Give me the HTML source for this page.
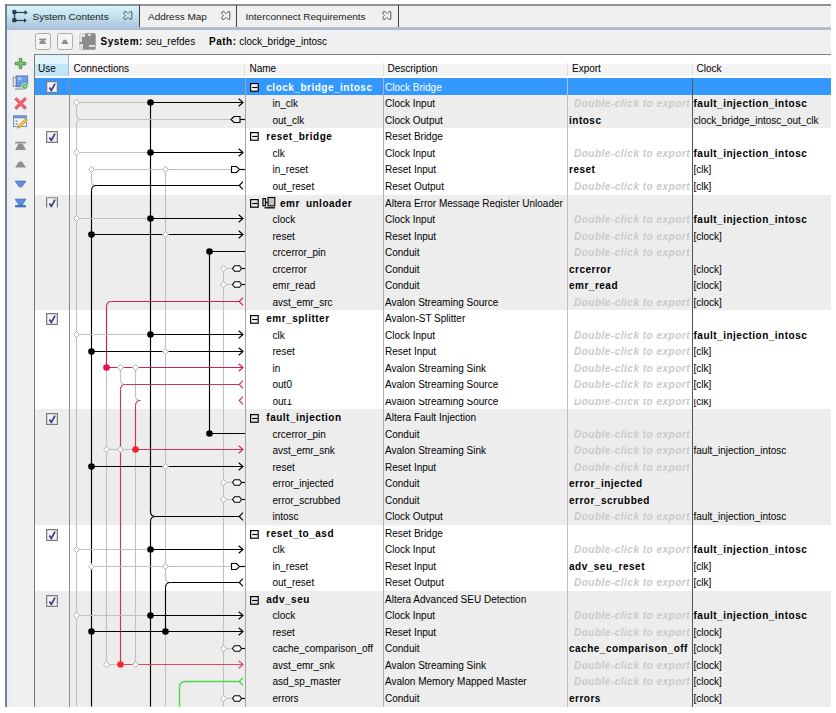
<!DOCTYPE html>
<html><head><meta charset="utf-8"><style>
html,body{margin:0;padding:0;background:#fff;}
#root{position:relative;width:836px;height:713px;overflow:hidden;background:#fff;font-family:"Liberation Sans",sans-serif;font-size:10px;color:#000;}
.a{position:absolute;}
.t{position:absolute;white-space:nowrap;line-height:16.56px;height:16.56px;}
.b{font-weight:bold;letter-spacing:0.5px;}
.dc{font-weight:bold;font-style:italic;color:#cacaca;letter-spacing:0.5px;}
svg{overflow:visible}
</style></head><body><div id="root">

<div class="a" style="left:5px;top:4px;width:825.5px;height:26px;background:#f0f0f0"></div>
<div class="a" style="left:5px;top:4px;width:825.5px;height:1.6px;background:#8d9397"></div>
<div class="a" style="left:139px;top:26.5px;width:691.5px;height:1.5px;background:#bcc4cb"></div>
<div class="a" style="left:5px;top:28px;width:825.5px;height:1.5px;background:#a9bdd0"></div>
<div class="a" style="left:5px;top:5.6px;width:134px;height:23.9px;background:linear-gradient(#d6f3fb,#c2e2ef 45%,#a9c1dc)"></div>
<div class="a" style="left:139px;top:5px;width:1px;height:22px;background:#404040"></div>
<div class="a" style="left:236px;top:5px;width:1px;height:22px;background:#404040"></div>
<div class="a" style="left:398px;top:5px;width:1px;height:22px;background:#404040"></div>
<div class="a" style="left:5px;top:29.5px;width:825.5px;height:677.1px;background:#f0f0f0"></div>
<div class="a" style="left:5px;top:4px;width:1.6px;height:702.6px;background:#76838f"></div>
<div class="a" style="left:6.6px;top:29.5px;width:5px;height:677.1px;background:linear-gradient(90deg,#e2ecf6,#f0f0f0)"></div>
<div class="t" style="left:32.5px;top:9.2px;transform:scaleY(0.9);transform-origin:0 50%;color:#1a1a1a">System Contents</div>
<div class="t" style="left:148px;top:9.2px;transform:scaleY(0.9);transform-origin:0 50%;color:#1a1a1a">Address Map</div>
<div class="t" style="left:245.5px;top:9.2px;transform:scaleY(0.9);transform-origin:0 50%;color:#1a1a1a">Interconnect Requirements</div>
<svg class="a" style="left:0;top:0" width="40" height="30"><g fill="#2c4452" stroke="#2c4452"><circle cx="14.4" cy="12.1" r="2.4" stroke="none"/><circle cx="14.4" cy="20.2" r="2.4" stroke="none"/><line x1="14.5" y1="12" x2="14.5" y2="20" stroke-width="1.4"/><line x1="15" y1="12.5" x2="26.5" y2="12.5" stroke-width="1.2"/><line x1="15" y1="20.5" x2="26" y2="20.5" stroke-width="1.2"/><path d="M24.5 10.8 L26.8 12.5 L24.5 14.2" fill="none" stroke-width="1.1"/><path d="M24 18.3 L26.8 20.5 L24 22.7 Z" stroke="none"/></g></svg>
<svg class="a" style="left:122.5px;top:11.3px" width="10" height="9" viewBox="0 0 10 9"><path d="M1.2 0.8 C2.5 0 3.5 1 5 2.6 C6.5 1 7.5 0 8.8 0.8 L8.8 8.2 C7.5 9 6.5 8 5 6.4 C3.5 8 2.5 9 1.2 8.2 C0.2 7 1 6 2.4 4.5 C1 3 0.2 2 1.2 0.8 Z" fill="none" stroke="#4a5a5e" stroke-width="1"/></svg>
<svg class="a" style="left:220.5px;top:11.3px" width="10" height="9" viewBox="0 0 10 9"><path d="M1.2 0.8 C2.5 0 3.5 1 5 2.6 C6.5 1 7.5 0 8.8 0.8 L8.8 8.2 C7.5 9 6.5 8 5 6.4 C3.5 8 2.5 9 1.2 8.2 C0.2 7 1 6 2.4 4.5 C1 3 0.2 2 1.2 0.8 Z" fill="none" stroke="#4a5a5e" stroke-width="1"/></svg>
<svg class="a" style="left:382px;top:11.3px" width="10" height="9" viewBox="0 0 10 9"><path d="M1.2 0.8 C2.5 0 3.5 1 5 2.6 C6.5 1 7.5 0 8.8 0.8 L8.8 8.2 C7.5 9 6.5 8 5 6.4 C3.5 8 2.5 9 1.2 8.2 C0.2 7 1 6 2.4 4.5 C1 3 0.2 2 1.2 0.8 Z" fill="none" stroke="#4a5a5e" stroke-width="1"/></svg>
<div class="a" style="left:35.2px;top:33.2px;width:15.8px;height:16.4px;box-sizing:border-box;border:1px solid #adadad;border-radius:2.5px;background:#f5f5f5"></div>
<div class="a" style="left:57.1px;top:33.2px;width:15.8px;height:16.4px;box-sizing:border-box;border:1px solid #adadad;border-radius:2.5px;background:#f5f5f5"></div>
<svg class="a" style="left:35px;top:33px" width="40" height="17"><g fill="#8f8f8f"><rect x="4" y="5.6" width="7.2" height="1.6"/><path d="M5.8 7.2 L9.4 7.2 L11.2 11 L4 11 Z"/><path d="M28.5 6.7 L31.2 6.7 L33.4 11 L26.4 11 Z"/></g></svg>
<svg class="a" style="left:79px;top:33px" width="17" height="17"><rect x="0.3" y="0.3" width="16.4" height="16.4" rx="1.5" fill="#8c8c8c"/><path d="M0.3 0.3 H6 V4 H3 V9 H0.3 Z" fill="#f0f0f0" opacity="0.85"/><path d="M0.3 11 H4 V16.7 H0.3 Z" fill="#f0f0f0" opacity="0.8"/><path d="M9 1 H12 V3 H9 Z" fill="#d8d8d8"/><path d="M10 12 H16 V14 H10 Z" fill="#dcdcdc"/></svg>
<div class="t" style="left:100.5px;top:34.0px"><span class="b">System:</span> seu_refdes</div>
<div class="t" style="left:209px;top:34.0px"><span class="b">Path:</span> clock_bridge_intosc</div>
<svg class="a" style="left:0;top:50px" width="34" height="165"><path d="M19.2 8.4 H21.8 V12.2 H25.8 V14.8 H21.8 V18.6 H19.2 V14.8 H15.2 V12.2 H19.2 Z" fill="#78c474" stroke="#3d8c3d" stroke-width="0.9"/><rect x="13.2" y="27.2" width="3" height="9" fill="#f4f4f4" stroke="#808080" stroke-width="0.9"/><rect x="16.2" y="25.9" width="11.5" height="10.9" fill="#6f9be0" stroke="#4670b8" stroke-width="0.8"/><rect x="17.5" y="27.2" width="4" height="3" fill="#a8c6f0"/><rect x="15" y="38.3" width="9" height="1.4" fill="#a0a0a0"/><circle cx="24.6" cy="36.4" r="3" fill="#55b055" stroke="#e8f4e8" stroke-width="0.8"/><path d="M23.5 36.4 H25.8" stroke="#fff" stroke-width="0.9"/><path d="M16.4 47.4 L20.6 51.4 L24.8 47.4 L26.6 49.2 L22.5 53.4 L26.6 57.6 L24.8 59.4 L20.6 55.4 L16.4 59.4 L14.6 57.6 L18.7 53.4 L14.6 49.2 Z" fill="#f25c6c" stroke="#e04458" stroke-width="0.6"/><rect x="13.6" y="65.8" width="12.8" height="10.8" fill="#f4f6fa" stroke="#6680a8" stroke-width="0.9"/><rect x="13.6" y="65.8" width="12.8" height="2.6" fill="#6d95d4"/><rect x="15.5" y="70.5" width="2.2" height="1.3" fill="#7a8aa0"/><rect x="15.5" y="73.3" width="2.2" height="1.3" fill="#7a8aa0"/><path d="M17.5 78.2 L18.4 75.2 L25.6 68.4 L27.5 70.2 L20.3 77.2 Z" fill="#f2c640" stroke="#b88a20" stroke-width="0.7"/><rect x="15.1" y="91.7" width="10.9" height="1.7" fill="#8e8e8e"/><path d="M18.6 93.4 L22.5 93.4 L26 99.9 L15.1 99.9 Z" fill="#8e8e8e"/><path d="M19 111.4 L22 111.4 L26 117.4 L15.1 117.4 Z" fill="#8e8e8e"/><path d="M15.1 131 L26 131 L21.8 137 L19.3 137 Z" fill="#5b8ee0" stroke="#3a66b8" stroke-width="0.6"/><path d="M15.1 149.1 L26 149.1 L22.3 155 L18.8 155 Z" fill="#5b8ee0" stroke="#3a66b8" stroke-width="0.6"/><rect x="15.1" y="155.1" width="10.9" height="2.2" fill="#3d6cc8"/></svg>
<div class="a" style="left:34px;top:54.0px;width:796.5px;height:652.6px;background:#fff"></div>
<div class="a" style="left:34px;top:54.0px;width:796.5px;height:1px;background:#7f7f7f"></div>
<div class="a" style="left:34px;top:54.0px;width:1px;height:652.6px;background:#737b80"></div>
<div class="a" style="left:35px;top:55.0px;width:795.5px;height:20.799999999999997px;background:linear-gradient(#ffffff,#ffffff 42%,#f5f5f5 45%,#f2f2f2)"></div>
<div class="a" style="left:35px;top:55.0px;width:33px;height:20.799999999999997px;background:linear-gradient(#e2f3fb,#e2f3fb 42%,#c4e7f7 45%,#bfe4f6)"></div>
<div class="a" style="left:68px;top:55.0px;width:1px;height:20.799999999999997px;background:#9bb8cc"></div>
<div class="a" style="left:244px;top:63.0px;width:1px;height:12.799999999999997px;background:#dedede"></div>
<div class="a" style="left:383px;top:63.0px;width:1px;height:12.799999999999997px;background:#dedede"></div>
<div class="a" style="left:567px;top:63.0px;width:1px;height:12.799999999999997px;background:#dedede"></div>
<div class="a" style="left:692px;top:63.0px;width:1px;height:12.799999999999997px;background:#dedede"></div>
<div class="t" style="left:38px;top:60.6px">Use</div>
<div class="t" style="left:73.5px;top:60.6px">Connections</div>
<div class="t" style="left:249.5px;top:60.6px">Name</div>
<div class="t" style="left:387.5px;top:60.6px">Description</div>
<div class="t" style="left:572px;top:60.6px">Export</div>
<div class="t" style="left:696.5px;top:60.6px">Clock</div>
<div class="a" style="left:35px;top:78.00px;width:795.5px;height:49.68px;background:#ededed"></div>
<div class="a" style="left:35px;top:194.80px;width:795.5px;height:115.04px;background:#ededed"></div>
<div class="a" style="left:35px;top:409.20px;width:795.5px;height:115.92px;background:#ededed"></div>
<div class="a" style="left:35px;top:591.36px;width:795.5px;height:115.24px;background:#ededed"></div>
<div class="a" style="left:35px;top:78.00px;width:795.5px;height:16.56px;background:#3399ff"></div>
<div class="a" style="left:69px;top:78.0px;width:1px;height:628.6px;background:#8a8a8a"></div>
<div class="a" style="left:245px;top:78.0px;width:1px;height:628.6px;background:#a4a4a4"></div>
<div class="a" style="left:383px;top:78.0px;width:1px;height:628.6px;background:#b0b0b0"></div>
<div class="a" style="left:567px;top:78.0px;width:1px;height:628.6px;background:#c0c0c0"></div>
<div class="a" style="left:692px;top:78.0px;width:1px;height:628.6px;background:#555"></div>
<svg class="a" style="left:46px;top:81.40px;" width="12" height="12"><rect x="0.5" y="0.5" width="11" height="11" fill="#f4f4f8" stroke="#7c7c7c"/><rect x="1.5" y="1.5" width="9" height="9" fill="none" stroke="#d4d4de" stroke-width="1"/><path d="M3.4 6.4 L5.4 9.4 L9 2.6" fill="none" stroke="#3b3f8e" stroke-width="1.8" stroke-linejoin="round"/></svg>
<svg class="a" style="left:250px;top:82.80px" width="9" height="9"><rect x="0.6" y="0.6" width="7.6" height="7.6" fill="#fff" stroke="#000" stroke-width="1.2"/><line x1="2.2" y1="4.5" x2="7.5" y2="4.5" stroke="#000" stroke-width="1.2"/></svg>
<div class="t b" style="left:266.3px;top:79.70px;color:#fff">clock_bridge_intosc</div>
<div class="t" style="left:385px;top:79.70px;color:#fff">Clock Bridge</div>
<div class="t" style="left:272.5px;top:96.26px">in_clk</div>
<div class="t" style="left:385px;top:96.26px;color:#000">Clock Input</div>
<div class="t dc" style="left:574px;top:96.26px">Double-click to export</div>
<div class="t b" style="left:693.5px;top:96.26px">fault_injection_intosc</div>
<div class="t" style="left:272.5px;top:112.82px">out_clk</div>
<div class="t" style="left:385px;top:112.82px;color:#000">Clock Output</div>
<div class="t b" style="left:569px;top:112.82px">intosc</div>
<div class="t" style="left:693.5px;top:112.82px">clock_bridge_intosc_out_clk</div>
<svg class="a" style="left:46px;top:131.08px;" width="12" height="12"><rect x="0.5" y="0.5" width="11" height="11" fill="#f4f4f8" stroke="#7c7c7c"/><rect x="1.5" y="1.5" width="9" height="9" fill="none" stroke="#d4d4de" stroke-width="1"/><path d="M3.4 6.4 L5.4 9.4 L9 2.6" fill="none" stroke="#3b3f8e" stroke-width="1.8" stroke-linejoin="round"/></svg>
<svg class="a" style="left:250px;top:132.48px" width="9" height="9"><rect x="0.6" y="0.6" width="7.6" height="7.6" fill="none" stroke="#000" stroke-width="1.2"/><line x1="2.2" y1="4.5" x2="7.5" y2="4.5" stroke="#000" stroke-width="1.2"/></svg>
<div class="t b" style="left:266.3px;top:129.38px;color:#000">reset_bridge</div>
<div class="t" style="left:385px;top:129.38px;color:#000">Reset Bridge</div>
<div class="t" style="left:272.5px;top:145.94px">clk</div>
<div class="t" style="left:385px;top:145.94px;color:#000">Clock Input</div>
<div class="t dc" style="left:574px;top:145.94px">Double-click to export</div>
<div class="t b" style="left:693.5px;top:145.94px">fault_injection_intosc</div>
<div class="t" style="left:272.5px;top:162.46px">in_reset</div>
<div class="t" style="left:385px;top:162.46px;color:#000">Reset Input</div>
<div class="t b" style="left:569px;top:162.46px">reset</div>
<div class="t" style="left:693.5px;top:162.46px">[clk]</div>
<div class="t" style="left:272.5px;top:178.97px">out_reset</div>
<div class="t" style="left:385px;top:178.97px;color:#000">Reset Output</div>
<div class="t dc" style="left:574px;top:178.97px">Double-click to export</div>
<div class="t" style="left:693.5px;top:178.97px">[clk]</div>
<svg class="a" style="left:46px;top:197.32px;clip-path:inset(0 0 1.7px 0);" width="12" height="12"><rect x="0.5" y="0.5" width="11" height="11" fill="#f4f4f8" stroke="#7c7c7c"/><rect x="1.5" y="1.5" width="9" height="9" fill="none" stroke="#d4d4de" stroke-width="1"/><path d="M3.4 6.4 L5.4 9.4 L9 2.6" fill="none" stroke="#3b3f8e" stroke-width="1.8" stroke-linejoin="round"/></svg>
<svg class="a" style="left:250px;top:198.72px" width="9" height="9"><rect x="0.6" y="0.6" width="7.6" height="7.6" fill="none" stroke="#000" stroke-width="1.2"/><line x1="2.2" y1="4.5" x2="7.5" y2="4.5" stroke="#000" stroke-width="1.2"/></svg>
<svg class="a" style="left:261px;top:193.92px" width="16" height="16"><g fill="none" stroke="#000" stroke-width="1.1"><rect x="1.9" y="4.6" width="2.6" height="7.2" fill="#d0d0d0"/><rect x="7" y="3.5" width="6.8" height="8.4" fill="#c4c4c4"/><line x1="4.5" y1="8.5" x2="7" y2="8.5"/><line x1="3.5" y1="13.8" x2="14" y2="13.8" stroke-width="1.3"/></g></svg>
<div class="t b" style="left:280px;top:195.88px;height:11.72px;overflow:hidden;color:#000">emr_unloader</div>
<div class="t" style="left:385px;top:195.88px;height:11.72px;overflow:hidden;">Altera Error Message Register Unloader</div>
<div class="t" style="left:272.5px;top:212.00px">clock</div>
<div class="t" style="left:385px;top:212.00px;color:#000">Clock Input</div>
<div class="t dc" style="left:574px;top:212.00px">Double-click to export</div>
<div class="t b" style="left:693.5px;top:212.00px">fault_injection_intosc</div>
<div class="t" style="left:272.5px;top:228.51px">reset</div>
<div class="t" style="left:385px;top:228.51px;color:#000">Reset Input</div>
<div class="t dc" style="left:574px;top:228.51px">Double-click to export</div>
<div class="t" style="left:693.5px;top:228.51px">[clock]</div>
<div class="t" style="left:272.5px;top:245.03px">crcerror_pin</div>
<div class="t" style="left:385px;top:245.03px;color:#000">Conduit</div>
<div class="t dc" style="left:574px;top:245.03px">Double-click to export</div>
<div class="t" style="left:272.5px;top:261.54px">crcerror</div>
<div class="t" style="left:385px;top:261.54px;color:#000">Conduit</div>
<div class="t b" style="left:569px;top:261.54px">crcerror</div>
<div class="t" style="left:693.5px;top:261.54px">[clock]</div>
<div class="t" style="left:272.5px;top:278.06px">emr_read</div>
<div class="t" style="left:385px;top:278.06px;color:#000">Conduit</div>
<div class="t b" style="left:569px;top:278.06px">emr_read</div>
<div class="t" style="left:693.5px;top:278.06px">[clock]</div>
<div class="t" style="left:272.5px;top:294.57px">avst_emr_src</div>
<div class="t" style="left:385px;top:294.57px;color:#000">Avalon Streaming Source</div>
<div class="t dc" style="left:574px;top:294.57px">Double-click to export</div>
<div class="t" style="left:693.5px;top:294.57px">[clock]</div>
<svg class="a" style="left:46px;top:313.24px;" width="12" height="12"><rect x="0.5" y="0.5" width="11" height="11" fill="#f4f4f8" stroke="#7c7c7c"/><rect x="1.5" y="1.5" width="9" height="9" fill="none" stroke="#d4d4de" stroke-width="1"/><path d="M3.4 6.4 L5.4 9.4 L9 2.6" fill="none" stroke="#3b3f8e" stroke-width="1.8" stroke-linejoin="round"/></svg>
<svg class="a" style="left:250px;top:314.64px" width="9" height="9"><rect x="0.6" y="0.6" width="7.6" height="7.6" fill="none" stroke="#000" stroke-width="1.2"/><line x1="2.2" y1="4.5" x2="7.5" y2="4.5" stroke="#000" stroke-width="1.2"/></svg>
<div class="t b" style="left:266.3px;top:311.09px;color:#000">emr_splitter</div>
<div class="t" style="left:385px;top:311.09px;color:#000">Avalon-ST Splitter</div>
<div class="t" style="left:272.5px;top:327.60px">clk</div>
<div class="t" style="left:385px;top:327.60px;color:#000">Clock Input</div>
<div class="t dc" style="left:574px;top:327.60px">Double-click to export</div>
<div class="t b" style="left:693.5px;top:327.60px">fault_injection_intosc</div>
<div class="t" style="left:272.5px;top:344.12px">reset</div>
<div class="t" style="left:385px;top:344.12px;color:#000">Reset Input</div>
<div class="t dc" style="left:574px;top:344.12px">Double-click to export</div>
<div class="t" style="left:693.5px;top:344.12px">[clk]</div>
<div class="t" style="left:272.5px;top:360.63px">in</div>
<div class="t" style="left:385px;top:360.63px;color:#000">Avalon Streaming Sink</div>
<div class="t dc" style="left:574px;top:360.63px">Double-click to export</div>
<div class="t" style="left:693.5px;top:360.63px">[clk]</div>
<div class="t" style="left:272.5px;top:377.15px">out0</div>
<div class="t" style="left:385px;top:377.15px;color:#000">Avalon Streaming Source</div>
<div class="t dc" style="left:574px;top:377.15px">Double-click to export</div>
<div class="t" style="left:693.5px;top:377.15px">[clk]</div>
<div class="a" style="left:272.5px;top:398.64px;height:10.56px;overflow:hidden;width:300px"><div class="t" style="left:0;top:-4.30px">out1</div><div class="t" style="left:112.5px;top:-4.30px">Avalon Streaming Source</div></div>
<div class="a" style="left:570px;top:398.64px;height:10.56px;overflow:hidden;width:200px"><div class="t dc" style="left:4px;top:-4.30px">Double-click to export</div><div class="t" style="left:123.5px;top:-4.30px">[clk]</div></div>
<svg class="a" style="left:46px;top:412.60px;" width="12" height="12"><rect x="0.5" y="0.5" width="11" height="11" fill="#f4f4f8" stroke="#7c7c7c"/><rect x="1.5" y="1.5" width="9" height="9" fill="none" stroke="#d4d4de" stroke-width="1"/><path d="M3.4 6.4 L5.4 9.4 L9 2.6" fill="none" stroke="#3b3f8e" stroke-width="1.8" stroke-linejoin="round"/></svg>
<svg class="a" style="left:250px;top:414.00px" width="9" height="9"><rect x="0.6" y="0.6" width="7.6" height="7.6" fill="none" stroke="#000" stroke-width="1.2"/><line x1="2.2" y1="4.5" x2="7.5" y2="4.5" stroke="#000" stroke-width="1.2"/></svg>
<div class="t b" style="left:266.3px;top:410.18px;color:#000">fault_injection</div>
<div class="t" style="left:385px;top:410.18px;color:#000">Altera Fault Injection</div>
<div class="t" style="left:272.5px;top:426.69px">crcerror_pin</div>
<div class="t" style="left:385px;top:426.69px;color:#000">Conduit</div>
<div class="t dc" style="left:574px;top:426.69px">Double-click to export</div>
<div class="t" style="left:272.5px;top:443.21px">avst_emr_snk</div>
<div class="t" style="left:385px;top:443.21px;color:#000">Avalon Streaming Sink</div>
<div class="t dc" style="left:574px;top:443.21px">Double-click to export</div>
<div class="t" style="left:693.5px;top:443.21px">fault_injection_intosc</div>
<div class="t" style="left:272.5px;top:459.72px">reset</div>
<div class="t" style="left:385px;top:459.72px;color:#000">Reset Input</div>
<div class="t dc" style="left:574px;top:459.72px">Double-click to export</div>
<div class="t" style="left:272.5px;top:476.24px">error_injected</div>
<div class="t" style="left:385px;top:476.24px;color:#000">Conduit</div>
<div class="t b" style="left:569px;top:476.24px">error_injected</div>
<div class="t" style="left:272.5px;top:492.75px">error_scrubbed</div>
<div class="t" style="left:385px;top:492.75px;color:#000">Conduit</div>
<div class="t b" style="left:569px;top:492.75px">error_scrubbed</div>
<div class="t" style="left:272.5px;top:509.27px">intosc</div>
<div class="t" style="left:385px;top:509.27px;color:#000">Clock Output</div>
<div class="t dc" style="left:574px;top:509.27px">Double-click to export</div>
<div class="t" style="left:693.5px;top:509.27px">fault_injection_intosc</div>
<svg class="a" style="left:46px;top:528.52px;" width="12" height="12"><rect x="0.5" y="0.5" width="11" height="11" fill="#f4f4f8" stroke="#7c7c7c"/><rect x="1.5" y="1.5" width="9" height="9" fill="none" stroke="#d4d4de" stroke-width="1"/><path d="M3.4 6.4 L5.4 9.4 L9 2.6" fill="none" stroke="#3b3f8e" stroke-width="1.8" stroke-linejoin="round"/></svg>
<svg class="a" style="left:250px;top:529.92px" width="9" height="9"><rect x="0.6" y="0.6" width="7.6" height="7.6" fill="none" stroke="#000" stroke-width="1.2"/><line x1="2.2" y1="4.5" x2="7.5" y2="4.5" stroke="#000" stroke-width="1.2"/></svg>
<div class="t b" style="left:266.3px;top:525.78px;color:#000">reset_to_asd</div>
<div class="t" style="left:385px;top:525.78px;color:#000">Reset Bridge</div>
<div class="t" style="left:272.5px;top:542.30px">clk</div>
<div class="t" style="left:385px;top:542.30px;color:#000">Clock Input</div>
<div class="t dc" style="left:574px;top:542.30px">Double-click to export</div>
<div class="t b" style="left:693.5px;top:542.30px">fault_injection_intosc</div>
<div class="t" style="left:272.5px;top:558.82px">in_reset</div>
<div class="t" style="left:385px;top:558.82px;color:#000">Reset Input</div>
<div class="t b" style="left:569px;top:558.82px">adv_seu_reset</div>
<div class="t" style="left:693.5px;top:558.82px">[clk]</div>
<div class="t" style="left:272.5px;top:575.33px">out_reset</div>
<div class="t" style="left:385px;top:575.33px;color:#000">Reset Output</div>
<div class="t dc" style="left:574px;top:575.33px">Double-click to export</div>
<div class="t" style="left:693.5px;top:575.33px">[clk]</div>
<svg class="a" style="left:46px;top:594.76px;" width="12" height="12"><rect x="0.5" y="0.5" width="11" height="11" fill="#f4f4f8" stroke="#7c7c7c"/><rect x="1.5" y="1.5" width="9" height="9" fill="none" stroke="#d4d4de" stroke-width="1"/><path d="M3.4 6.4 L5.4 9.4 L9 2.6" fill="none" stroke="#3b3f8e" stroke-width="1.8" stroke-linejoin="round"/></svg>
<svg class="a" style="left:250px;top:596.16px" width="9" height="9"><rect x="0.6" y="0.6" width="7.6" height="7.6" fill="none" stroke="#000" stroke-width="1.2"/><line x1="2.2" y1="4.5" x2="7.5" y2="4.5" stroke="#000" stroke-width="1.2"/></svg>
<div class="t b" style="left:266.3px;top:591.85px;color:#000">adv_seu</div>
<div class="t" style="left:385px;top:591.85px;color:#000">Altera Advanced SEU Detection</div>
<div class="t" style="left:272.5px;top:608.36px">clock</div>
<div class="t" style="left:385px;top:608.36px;color:#000">Clock Input</div>
<div class="t dc" style="left:574px;top:608.36px">Double-click to export</div>
<div class="t b" style="left:693.5px;top:608.36px">fault_injection_intosc</div>
<div class="t" style="left:272.5px;top:624.88px">reset</div>
<div class="t" style="left:385px;top:624.88px;color:#000">Reset Input</div>
<div class="t dc" style="left:574px;top:624.88px">Double-click to export</div>
<div class="t" style="left:693.5px;top:624.88px">[clock]</div>
<div class="t" style="left:272.5px;top:641.39px">cache_comparison_off</div>
<div class="t" style="left:385px;top:641.39px;color:#000">Conduit</div>
<div class="t b" style="left:569px;top:641.39px">cache_comparison_off</div>
<div class="t" style="left:693.5px;top:641.39px">[clock]</div>
<div class="t" style="left:272.5px;top:657.90px">avst_emr_snk</div>
<div class="t" style="left:385px;top:657.90px;color:#000">Avalon Streaming Sink</div>
<div class="t dc" style="left:574px;top:657.90px">Double-click to export</div>
<div class="t" style="left:693.5px;top:657.90px">[clock]</div>
<div class="t" style="left:272.5px;top:674.42px">asd_sp_master</div>
<div class="t" style="left:385px;top:674.42px;color:#000">Avalon Memory Mapped Master</div>
<div class="t dc" style="left:574px;top:674.42px">Double-click to export</div>
<div class="t" style="left:693.5px;top:674.42px">[clock]</div>
<div class="t" style="left:272.5px;top:690.93px">errors</div>
<div class="t" style="left:385px;top:690.93px;color:#000">Conduit</div>
<div class="t b" style="left:569px;top:690.93px">errors</div>
<div class="t" style="left:693.5px;top:690.93px">[clock]</div>
<svg class="a" style="left:0;top:0" width="836" height="713" viewBox="0 0 836 713"><line x1="76.50" y1="102.50" x2="76.50" y2="114.50" stroke="#c2c2c2" stroke-width="1.15"/><path d="M76.50 111.50 L76.50 114.50 C76.50 118.00 78.50 119.50 81.50 119.50" fill="none" stroke="#c2c2c2" stroke-width="1.15"/><path d="M81.50 119.50 C78.50 119.50 76.50 121.00 76.50 124.50" fill="none" stroke="#c2c2c2" stroke-width="1.15"/><line x1="76.50" y1="124.50" x2="76.50" y2="706.60" stroke="#c2c2c2" stroke-width="1.15"/><line x1="91.50" y1="169.50" x2="91.50" y2="180.50" stroke="#c2c2c2" stroke-width="1.15"/><path d="M91.50 177.50 L91.50 180.50 C91.50 184.00 93.50 185.50 96.50 185.50" fill="none" stroke="#c2c2c2" stroke-width="1.15"/><path d="M96.50 185.50 C93.50 185.50 91.50 187.00 91.50 190.50" fill="none" stroke="#000" stroke-width="1.15"/><line x1="91.50" y1="190.50" x2="91.50" y2="706.60" stroke="#000" stroke-width="1.15"/><path d="M111.50 301.50 C108.50 301.50 106.50 303.00 106.50 306.50" fill="none" stroke="#c8205a" stroke-width="1.15"/><line x1="106.50" y1="306.50" x2="106.50" y2="367.50" stroke="#c8205a" stroke-width="1.15"/><line x1="106.50" y1="367.50" x2="106.50" y2="664.50" stroke="#c2c2c2" stroke-width="1.15"/><line x1="120.50" y1="367.50" x2="120.50" y2="379.50" stroke="#c2c2c2" stroke-width="1.15"/><path d="M120.50 376.50 L120.50 379.50 C120.50 383.00 122.50 384.50 125.50 384.50" fill="none" stroke="#c2c2c2" stroke-width="1.15"/><path d="M125.50 384.50 C122.50 384.50 120.50 386.00 120.50 389.50" fill="none" stroke="#cc3556" stroke-width="1.15"/><line x1="120.50" y1="389.50" x2="120.50" y2="664.50" stroke="#cc3556" stroke-width="1.15"/><line x1="135.50" y1="367.50" x2="135.50" y2="395.50" stroke="#c2c2c2" stroke-width="1.15"/><path d="M135.50 392.50 L135.50 395.50 C135.50 399.00 137.50 400.50 140.50 400.50" fill="none" stroke="#c2c2c2" stroke-width="1.15"/><path d="M140.50 400.50 C137.50 400.50 135.50 402.00 135.50 405.50" fill="none" stroke="#cc3556" stroke-width="1.15"/><line x1="135.50" y1="405.50" x2="135.50" y2="449.50" stroke="#cc3556" stroke-width="1.15"/><line x1="135.50" y1="449.50" x2="135.50" y2="664.50" stroke="#c2c2c2" stroke-width="1.15"/><line x1="150.50" y1="102.50" x2="150.50" y2="511.50" stroke="#000" stroke-width="1.15"/><path d="M150.50 508.50 L150.50 511.50 C150.50 515.00 152.50 516.50 155.50 516.50" fill="none" stroke="#000" stroke-width="1.15"/><path d="M155.50 516.50 C152.50 516.50 150.50 518.00 150.50 521.50" fill="none" stroke="#000" stroke-width="1.15"/><line x1="150.50" y1="521.50" x2="150.50" y2="706.60" stroke="#000" stroke-width="1.15"/><line x1="165.50" y1="169.50" x2="165.50" y2="577.50" stroke="#c2c2c2" stroke-width="1.15"/><path d="M165.50 574.50 L165.50 577.50 C165.50 581.00 167.50 582.50 170.50 582.50" fill="none" stroke="#c2c2c2" stroke-width="1.15"/><path d="M170.50 582.50 C167.50 582.50 165.50 584.00 165.50 587.50" fill="none" stroke="#000" stroke-width="1.15"/><line x1="165.50" y1="587.50" x2="165.50" y2="631.50" stroke="#000" stroke-width="1.15"/><line x1="165.50" y1="631.50" x2="165.50" y2="706.60" stroke="#c2c2c2" stroke-width="1.15"/><path d="M185.50 681.50 C181.50 681.50 179.50 683.00 179.50 687.50" fill="none" stroke="#48dc48" stroke-width="1.4"/><line x1="179.50" y1="687.50" x2="179.50" y2="706.60" stroke="#48dc48" stroke-width="1.4"/><line x1="209.50" y1="251.50" x2="209.50" y2="433.50" stroke="#000" stroke-width="1.15"/><line x1="223.50" y1="268.50" x2="223.50" y2="706.60" stroke="#c2c2c2" stroke-width="1.15"/><line x1="76.50" y1="102.50" x2="150.50" y2="102.50" stroke="#c2c2c2" stroke-width="1.15"/><line x1="150.50" y1="102.50" x2="243.00" y2="102.50" stroke="#000" stroke-width="1.15"/><path d="M238.70 98.70 L243.00 102.50 L238.70 106.30" fill="none" stroke="#000" stroke-width="1.15"/><line x1="76.50" y1="152.50" x2="150.50" y2="152.50" stroke="#c2c2c2" stroke-width="1.15"/><line x1="150.50" y1="152.50" x2="243.00" y2="152.50" stroke="#000" stroke-width="1.15"/><path d="M238.70 148.70 L243.00 152.50 L238.70 156.30" fill="none" stroke="#000" stroke-width="1.15"/><line x1="76.50" y1="218.50" x2="150.50" y2="218.50" stroke="#c2c2c2" stroke-width="1.15"/><line x1="150.50" y1="218.50" x2="243.00" y2="218.50" stroke="#000" stroke-width="1.15"/><path d="M238.70 214.70 L243.00 218.50 L238.70 222.30" fill="none" stroke="#000" stroke-width="1.15"/><line x1="76.50" y1="334.50" x2="150.50" y2="334.50" stroke="#c2c2c2" stroke-width="1.15"/><line x1="150.50" y1="334.50" x2="243.00" y2="334.50" stroke="#000" stroke-width="1.15"/><path d="M238.70 330.70 L243.00 334.50 L238.70 338.30" fill="none" stroke="#000" stroke-width="1.15"/><line x1="76.50" y1="549.50" x2="150.50" y2="549.50" stroke="#c2c2c2" stroke-width="1.15"/><line x1="150.50" y1="549.50" x2="243.00" y2="549.50" stroke="#000" stroke-width="1.15"/><path d="M238.70 545.70 L243.00 549.50 L238.70 553.30" fill="none" stroke="#000" stroke-width="1.15"/><line x1="76.50" y1="615.50" x2="150.50" y2="615.50" stroke="#c2c2c2" stroke-width="1.15"/><line x1="150.50" y1="615.50" x2="243.00" y2="615.50" stroke="#000" stroke-width="1.15"/><path d="M238.70 611.70 L243.00 615.50 L238.70 619.30" fill="none" stroke="#000" stroke-width="1.15"/><line x1="81.50" y1="119.50" x2="231.00" y2="119.50" stroke="#c2c2c2" stroke-width="1.15"/><path d="M231 119.50 L234 116.50 L240 116.50 L240 122.50 L234 122.50 Z" fill="none" stroke="#000" stroke-width="1.1"/><line x1="240.00" y1="119.50" x2="245.00" y2="119.50" stroke="#000" stroke-width="1.15"/><line x1="91.50" y1="169.50" x2="231.50" y2="169.50" stroke="#c2c2c2" stroke-width="1.15"/><path d="M231.5 166.50 L236.5 166.50 L239.5 169.50 L236.5 172.50 L231.5 172.50 Z" fill="none" stroke="#000" stroke-width="1.1"/><line x1="239.50" y1="169.50" x2="245.00" y2="169.50" stroke="#000" stroke-width="1.15"/><line x1="91.50" y1="566.50" x2="231.50" y2="566.50" stroke="#c2c2c2" stroke-width="1.15"/><path d="M231.5 563.50 L236.5 563.50 L239.5 566.50 L236.5 569.50 L231.5 569.50 Z" fill="none" stroke="#000" stroke-width="1.1"/><line x1="239.50" y1="566.50" x2="245.00" y2="566.50" stroke="#000" stroke-width="1.15"/><line x1="96.50" y1="185.50" x2="239.20" y2="185.50" stroke="#000" stroke-width="1.15"/><path d="M243.00 181.70 L239.20 185.50 L243.00 189.30" fill="none" stroke="#000" stroke-width="1.15"/><line x1="155.50" y1="516.50" x2="239.20" y2="516.50" stroke="#000" stroke-width="1.15"/><path d="M243.00 512.70 L239.20 516.50 L243.00 520.30" fill="none" stroke="#000" stroke-width="1.15"/><line x1="170.50" y1="582.50" x2="239.20" y2="582.50" stroke="#000" stroke-width="1.15"/><path d="M243.00 578.70 L239.20 582.50 L243.00 586.30" fill="none" stroke="#000" stroke-width="1.15"/><line x1="91.50" y1="234.50" x2="243.00" y2="234.50" stroke="#000" stroke-width="1.15"/><path d="M238.70 230.70 L243.00 234.50 L238.70 238.30" fill="none" stroke="#000" stroke-width="1.15"/><line x1="91.50" y1="351.50" x2="243.00" y2="351.50" stroke="#000" stroke-width="1.15"/><path d="M238.70 347.70 L243.00 351.50 L238.70 355.30" fill="none" stroke="#000" stroke-width="1.15"/><line x1="91.50" y1="466.50" x2="243.00" y2="466.50" stroke="#000" stroke-width="1.15"/><path d="M238.70 462.70 L243.00 466.50 L238.70 470.30" fill="none" stroke="#000" stroke-width="1.15"/><line x1="91.50" y1="631.50" x2="243.00" y2="631.50" stroke="#000" stroke-width="1.15"/><path d="M238.70 627.70 L243.00 631.50 L238.70 635.30" fill="none" stroke="#000" stroke-width="1.15"/><line x1="209.50" y1="251.50" x2="245.00" y2="251.50" stroke="#000" stroke-width="1.15"/><line x1="209.50" y1="433.50" x2="245.00" y2="433.50" stroke="#000" stroke-width="1.15"/><line x1="223.50" y1="268.50" x2="232.50" y2="268.50" stroke="#c2c2c2" stroke-width="1.15"/><path d="M232.5 268.50 L234.5 265.70 L239.5 265.70 L241.5 268.50 L239.5 271.30 L234.5 271.30 Z" fill="#fafafa" stroke="#000" stroke-width="1.05"/><line x1="241.50" y1="268.50" x2="245.00" y2="268.50" stroke="#000" stroke-width="1.15"/><line x1="223.50" y1="284.50" x2="232.50" y2="284.50" stroke="#c2c2c2" stroke-width="1.15"/><path d="M232.5 284.50 L234.5 281.70 L239.5 281.70 L241.5 284.50 L239.5 287.30 L234.5 287.30 Z" fill="#fafafa" stroke="#000" stroke-width="1.05"/><line x1="241.50" y1="284.50" x2="245.00" y2="284.50" stroke="#000" stroke-width="1.15"/><line x1="223.50" y1="482.50" x2="232.50" y2="482.50" stroke="#c2c2c2" stroke-width="1.15"/><path d="M232.5 482.50 L234.5 479.70 L239.5 479.70 L241.5 482.50 L239.5 485.30 L234.5 485.30 Z" fill="#fafafa" stroke="#000" stroke-width="1.05"/><line x1="241.50" y1="482.50" x2="245.00" y2="482.50" stroke="#000" stroke-width="1.15"/><line x1="223.50" y1="499.50" x2="232.50" y2="499.50" stroke="#c2c2c2" stroke-width="1.15"/><path d="M232.5 499.50 L234.5 496.70 L239.5 496.70 L241.5 499.50 L239.5 502.30 L234.5 502.30 Z" fill="#fafafa" stroke="#000" stroke-width="1.05"/><line x1="241.50" y1="499.50" x2="245.00" y2="499.50" stroke="#000" stroke-width="1.15"/><line x1="223.50" y1="648.50" x2="232.50" y2="648.50" stroke="#c2c2c2" stroke-width="1.15"/><path d="M232.5 648.50 L234.5 645.70 L239.5 645.70 L241.5 648.50 L239.5 651.30 L234.5 651.30 Z" fill="#fafafa" stroke="#000" stroke-width="1.05"/><line x1="241.50" y1="648.50" x2="245.00" y2="648.50" stroke="#000" stroke-width="1.15"/><line x1="223.50" y1="698.50" x2="232.50" y2="698.50" stroke="#c2c2c2" stroke-width="1.15"/><path d="M232.5 698.50 L234.5 695.70 L239.5 695.70 L241.5 698.50 L239.5 701.30 L234.5 701.30 Z" fill="#fafafa" stroke="#000" stroke-width="1.05"/><line x1="241.50" y1="698.50" x2="245.00" y2="698.50" stroke="#000" stroke-width="1.15"/><line x1="111.50" y1="301.50" x2="239.20" y2="301.50" stroke="#c8205a" stroke-width="1.15"/><path d="M243.00 297.70 L239.20 301.50 L243.00 305.30" fill="none" stroke="#c8205a" stroke-width="1.15"/><line x1="106.50" y1="367.50" x2="243.00" y2="367.50" stroke="#c8205a" stroke-width="1.15"/><path d="M238.70 363.70 L243.00 367.50 L238.70 371.30" fill="none" stroke="#c8205a" stroke-width="1.15"/><line x1="125.50" y1="384.50" x2="239.20" y2="384.50" stroke="#cc3556" stroke-width="1.15"/><path d="M243.00 380.70 L239.20 384.50 L243.00 388.30" fill="none" stroke="#cc3556" stroke-width="1.15"/><path d="M243.00 396.70 L239.20 400.50 L243.00 404.30" fill="none" stroke="#cc3556" stroke-width="1.15"/><line x1="106.50" y1="449.50" x2="135.50" y2="449.50" stroke="#c2c2c2" stroke-width="1.15"/><line x1="135.50" y1="449.50" x2="243.00" y2="449.50" stroke="#cc3556" stroke-width="1.15"/><path d="M238.70 445.70 L243.00 449.50 L238.70 453.30" fill="none" stroke="#cc3556" stroke-width="1.15"/><line x1="106.50" y1="664.50" x2="120.50" y2="664.50" stroke="#c2c2c2" stroke-width="1.15"/><line x1="120.50" y1="664.50" x2="243.00" y2="664.50" stroke="#dc4a50" stroke-width="1.15"/><path d="M238.70 660.70 L243.00 664.50 L238.70 668.30" fill="none" stroke="#dc4a50" stroke-width="1.15"/><line x1="184.50" y1="681.50" x2="239.20" y2="681.50" stroke="#48dc48" stroke-width="1.4"/><path d="M243.00 677.70 L239.20 681.50 L243.00 685.30" fill="none" stroke="#48dc48" stroke-width="1.4"/><path d="M73.60 102.50 L76.50 99.40 L79.40 102.50 L76.50 105.60 Z" fill="#fff" stroke="#b2b2b2" stroke-width="1"/><circle cx="150.50" cy="102.50" r="3.3" fill="#000"/><path d="M73.60 152.50 L76.50 149.40 L79.40 152.50 L76.50 155.60 Z" fill="#fff" stroke="#b2b2b2" stroke-width="1"/><circle cx="150.50" cy="152.50" r="3.3" fill="#000"/><path d="M73.60 218.50 L76.50 215.40 L79.40 218.50 L76.50 221.60 Z" fill="#fff" stroke="#b2b2b2" stroke-width="1"/><circle cx="150.50" cy="218.50" r="3.3" fill="#000"/><path d="M73.60 334.50 L76.50 331.40 L79.40 334.50 L76.50 337.60 Z" fill="#fff" stroke="#b2b2b2" stroke-width="1"/><circle cx="150.50" cy="334.50" r="3.3" fill="#000"/><path d="M73.60 549.50 L76.50 546.40 L79.40 549.50 L76.50 552.60 Z" fill="#fff" stroke="#b2b2b2" stroke-width="1"/><circle cx="150.50" cy="549.50" r="3.3" fill="#000"/><path d="M73.60 615.50 L76.50 612.40 L79.40 615.50 L76.50 618.60 Z" fill="#fff" stroke="#b2b2b2" stroke-width="1"/><circle cx="150.50" cy="615.50" r="3.3" fill="#000"/><path d="M88.60 169.50 L91.50 166.40 L94.40 169.50 L91.50 172.60 Z" fill="#fff" stroke="#b2b2b2" stroke-width="1"/><path d="M162.60 169.50 L165.50 166.40 L168.40 169.50 L165.50 172.60 Z" fill="#fff" stroke="#b2b2b2" stroke-width="1"/><path d="M88.60 566.50 L91.50 563.40 L94.40 566.50 L91.50 569.60 Z" fill="#fff" stroke="#b2b2b2" stroke-width="1"/><path d="M162.60 566.50 L165.50 563.40 L168.40 566.50 L165.50 569.60 Z" fill="#fff" stroke="#b2b2b2" stroke-width="1"/><circle cx="91.50" cy="234.50" r="3.3" fill="#000"/><path d="M162.60 234.50 L165.50 231.40 L168.40 234.50 L165.50 237.60 Z" fill="#fff" stroke="#b2b2b2" stroke-width="1"/><circle cx="91.50" cy="351.50" r="3.3" fill="#000"/><path d="M162.60 351.50 L165.50 348.40 L168.40 351.50 L165.50 354.60 Z" fill="#fff" stroke="#b2b2b2" stroke-width="1"/><circle cx="91.50" cy="466.50" r="3.3" fill="#000"/><path d="M162.60 466.50 L165.50 463.40 L168.40 466.50 L165.50 469.60 Z" fill="#fff" stroke="#b2b2b2" stroke-width="1"/><circle cx="91.50" cy="631.50" r="3.3" fill="#000"/><circle cx="165.50" cy="631.50" r="3.3" fill="#000"/><circle cx="209.50" cy="251.50" r="3.3" fill="#000"/><circle cx="209.50" cy="433.50" r="3.3" fill="#000"/><path d="M220.60 268.50 L223.50 265.40 L226.40 268.50 L223.50 271.60 Z" fill="#fff" stroke="#b2b2b2" stroke-width="1"/><path d="M220.60 284.50 L223.50 281.40 L226.40 284.50 L223.50 287.60 Z" fill="#fff" stroke="#b2b2b2" stroke-width="1"/><path d="M220.60 482.50 L223.50 479.40 L226.40 482.50 L223.50 485.60 Z" fill="#fff" stroke="#b2b2b2" stroke-width="1"/><path d="M220.60 499.50 L223.50 496.40 L226.40 499.50 L223.50 502.60 Z" fill="#fff" stroke="#b2b2b2" stroke-width="1"/><path d="M220.60 648.50 L223.50 645.40 L226.40 648.50 L223.50 651.60 Z" fill="#fff" stroke="#b2b2b2" stroke-width="1"/><path d="M220.60 698.50 L223.50 695.40 L226.40 698.50 L223.50 701.60 Z" fill="#fff" stroke="#b2b2b2" stroke-width="1"/><circle cx="106.50" cy="367.50" r="3.3" fill="#e8104a"/><path d="M117.60 367.50 L120.50 364.40 L123.40 367.50 L120.50 370.60 Z" fill="#fff" stroke="#b2b2b2" stroke-width="1"/><path d="M132.60 367.50 L135.50 364.40 L138.40 367.50 L135.50 370.60 Z" fill="#fff" stroke="#b2b2b2" stroke-width="1"/><path d="M103.60 449.50 L106.50 446.40 L109.40 449.50 L106.50 452.60 Z" fill="#fff" stroke="#b2b2b2" stroke-width="1"/><path d="M117.60 449.50 L120.50 446.40 L123.40 449.50 L120.50 452.60 Z" fill="#fff" stroke="#b2b2b2" stroke-width="1"/><circle cx="135.50" cy="449.50" r="3.3" fill="#f02030"/><path d="M103.60 664.50 L106.50 661.40 L109.40 664.50 L106.50 667.60 Z" fill="#fff" stroke="#b2b2b2" stroke-width="1"/><path d="M132.60 664.50 L135.50 661.40 L138.40 664.50 L135.50 667.60 Z" fill="#fff" stroke="#b2b2b2" stroke-width="1"/><circle cx="120.50" cy="664.50" r="3.3" fill="#f42a30"/></svg>
</div></body></html>
